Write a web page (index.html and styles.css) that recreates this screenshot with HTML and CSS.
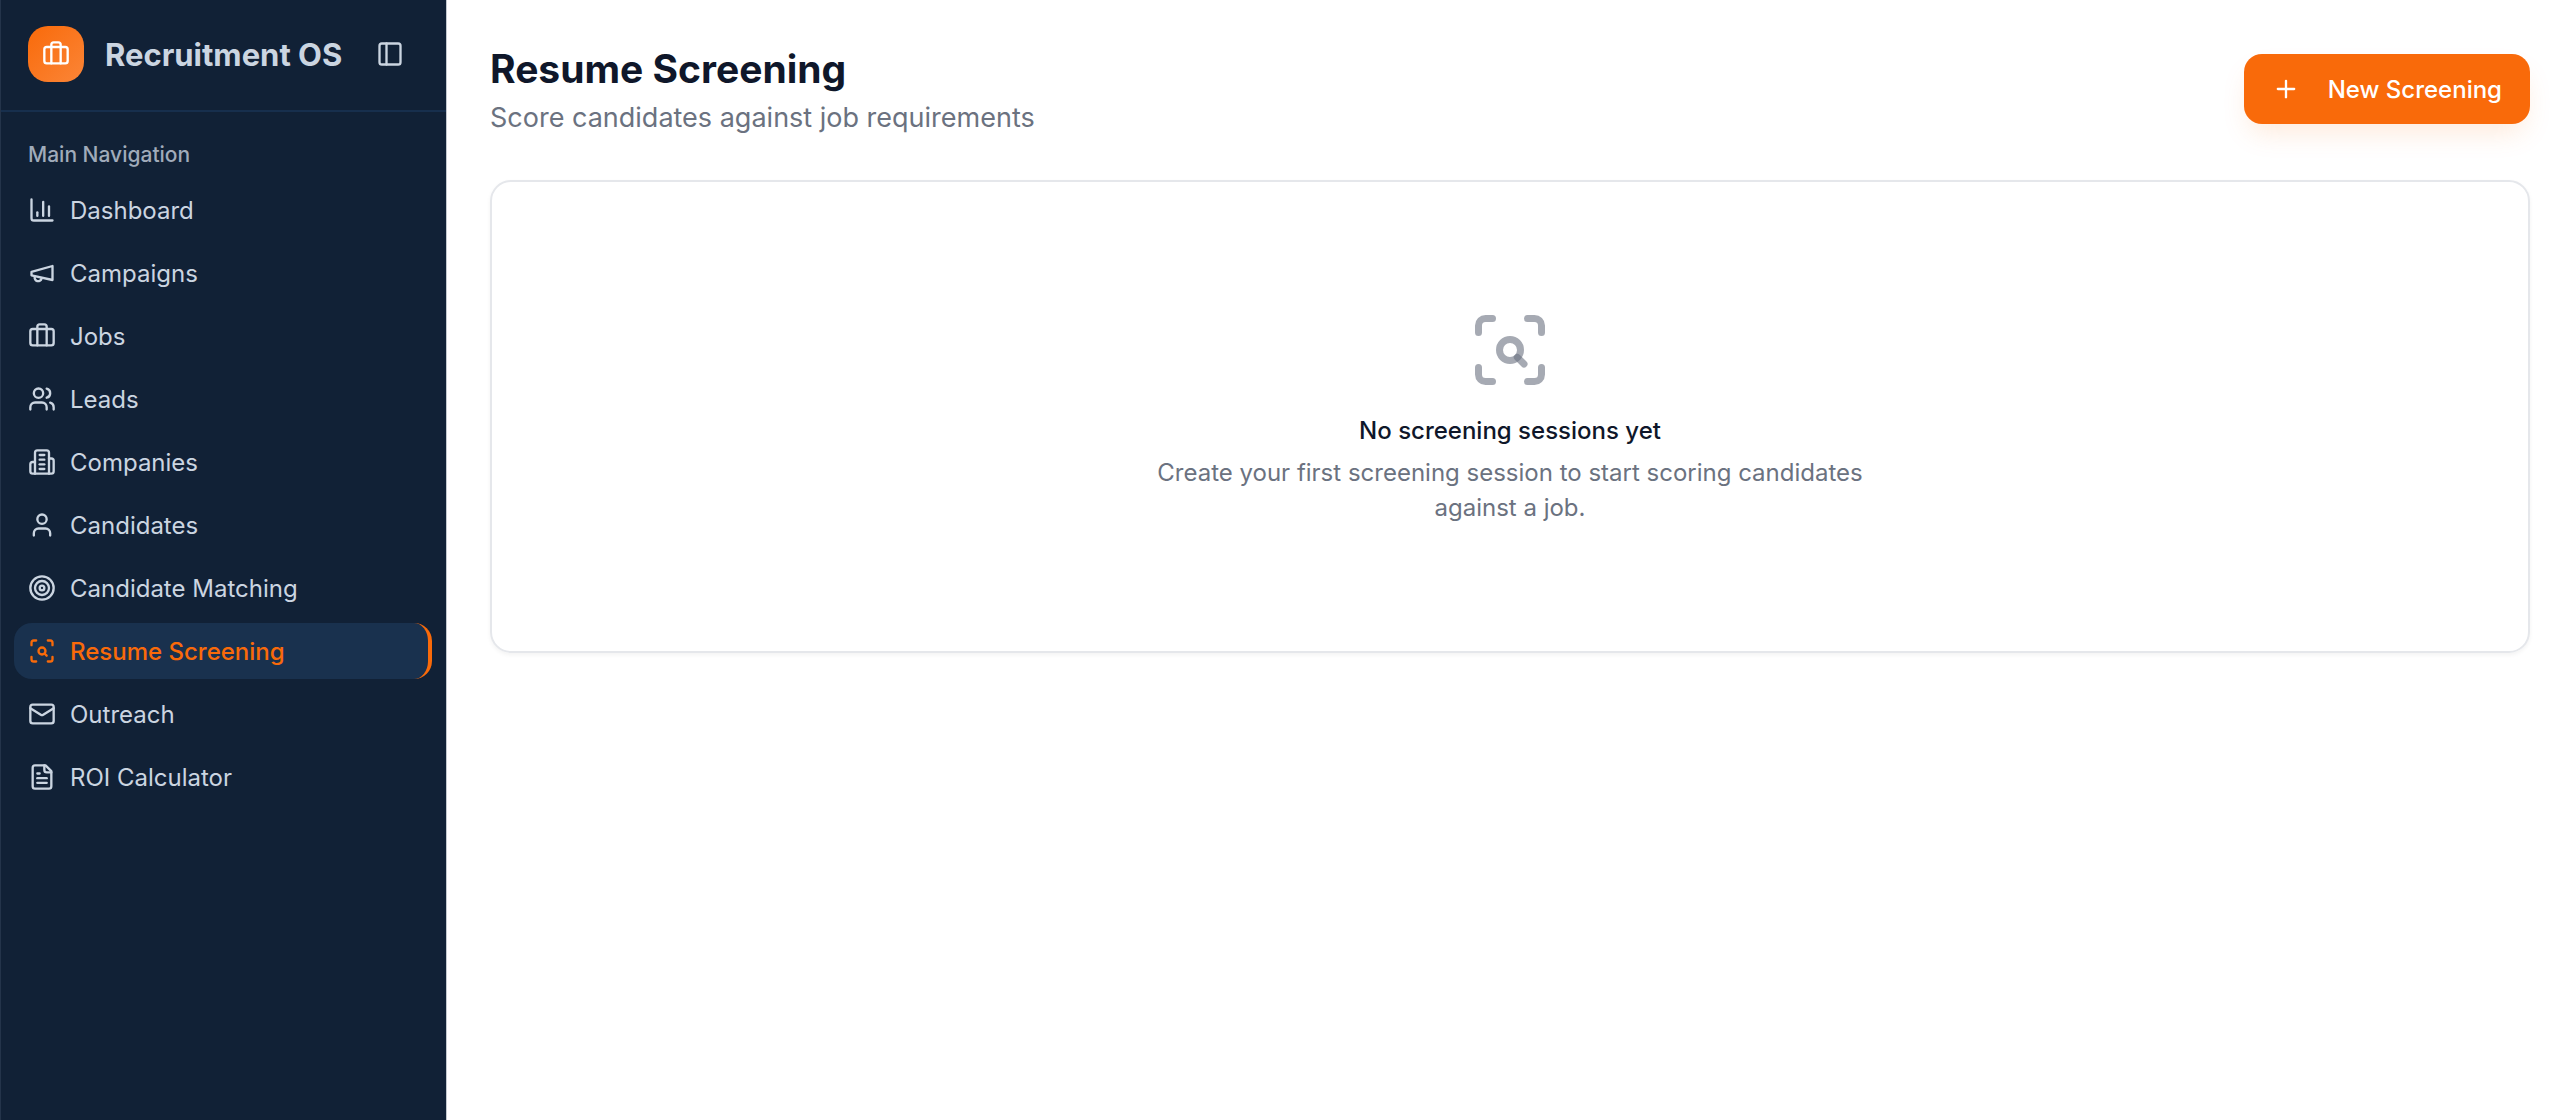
FILE: index.html
```html
<!DOCTYPE html>
<html lang="en">
<head>
<meta charset="utf-8">
<meta name="viewport" content="width=device-width, initial-scale=1">
<title>Resume Screening - Recruitment OS</title>
<link rel="stylesheet" href="styles.css">
</head>
<body>
<div class="app">
  <aside class="sidebar">
    <header class="sidebar-header">
      <span class="logo">
        <svg class="icon" viewBox="0 0 24 24" aria-hidden="true"><path d="M16 20V4a2 2 0 0 0-2-2h-4a2 2 0 0 0-2 2v16"/><rect x="2" y="6" width="20" height="14" rx="2"/></svg>
      </span>
      <span class="brand">Recruitment OS</span>
      <button class="toggle" type="button" aria-label="Toggle sidebar">
        <svg class="icon" viewBox="0 0 24 24" aria-hidden="true"><rect x="3" y="3" width="18" height="18" rx="2"/><path d="M9 3v18"/></svg>
      </button>
    </header>
    <nav class="nav" aria-labelledby="nav-label">
      <h2 class="nav-label" id="nav-label">Main Navigation</h2>
      <ul class="nav-list">
        <li><a class="nav-item" href="#dashboard"><svg class="icon" viewBox="0 0 24 24" aria-hidden="true"><path d="M3 3v16a2 2 0 0 0 2 2h16"/><path d="M18 17V9"/><path d="M13 17V5"/><path d="M8 17v-3"/></svg>Dashboard</a></li>
        <li><a class="nav-item" href="#campaigns"><svg class="icon" viewBox="0 0 24 24" aria-hidden="true"><path d="m3 11 18-5v12L3 14v-3z"/><path d="M11.6 16.8a3 3 0 1 1-5.8-1.6"/></svg>Campaigns</a></li>
        <li><a class="nav-item" href="#jobs"><svg class="icon" viewBox="0 0 24 24" aria-hidden="true"><path d="M16 20V4a2 2 0 0 0-2-2h-4a2 2 0 0 0-2 2v16"/><rect x="2" y="6" width="20" height="14" rx="2"/></svg>Jobs</a></li>
        <li><a class="nav-item" href="#leads"><svg class="icon" viewBox="0 0 24 24" aria-hidden="true"><path d="M16 21v-2a4 4 0 0 0-4-4H6a4 4 0 0 0-4 4v2"/><circle cx="9" cy="7" r="4"/><path d="M22 21v-2a4 4 0 0 0-3-3.87"/><path d="M16 3.13a4 4 0 0 1 0 7.75"/></svg>Leads</a></li>
        <li><a class="nav-item" href="#companies"><svg class="icon" viewBox="0 0 24 24" aria-hidden="true"><path d="M6 22V4a2 2 0 0 1 2-2h8a2 2 0 0 1 2 2v18Z"/><path d="M6 12H4a2 2 0 0 0-2 2v6a2 2 0 0 0 2 2h2"/><path d="M18 9h2a2 2 0 0 1 2 2v9a2 2 0 0 1-2 2h-2"/><path d="M10 6h4"/><path d="M10 10h4"/><path d="M10 14h4"/><path d="M10 18h4"/></svg>Companies</a></li>
        <li><a class="nav-item" href="#candidates"><svg class="icon" viewBox="0 0 24 24" aria-hidden="true"><path d="M19 21v-2a4 4 0 0 0-4-4H9a4 4 0 0 0-4 4v2"/><circle cx="12" cy="7" r="4"/></svg>Candidates</a></li>
        <li><a class="nav-item" href="#matching"><svg class="icon" viewBox="0 0 24 24" aria-hidden="true"><circle cx="12" cy="12" r="10"/><circle cx="12" cy="12" r="6"/><circle cx="12" cy="12" r="2"/></svg>Candidate Matching</a></li>
        <li><a class="nav-item active" href="#screening" aria-current="page"><svg class="icon" viewBox="0 0 24 24" aria-hidden="true"><path d="M3 7V5a2 2 0 0 1 2-2h2"/><path d="M17 3h2a2 2 0 0 1 2 2v2"/><path d="M21 17v2a2 2 0 0 1-2 2h-2"/><path d="M7 21H5a2 2 0 0 1-2-2v-2"/><circle cx="12" cy="12" r="3"/><path d="m16 16-1.9-1.9"/></svg>Resume Screening</a></li>
        <li><a class="nav-item" href="#outreach"><svg class="icon" viewBox="0 0 24 24" aria-hidden="true"><rect x="2" y="4" width="20" height="16" rx="2"/><path d="m22 7-8.97 5.7a1.94 1.94 0 0 1-2.06 0L2 7"/></svg>Outreach</a></li>
        <li><a class="nav-item" href="#roi"><svg class="icon" viewBox="0 0 24 24" aria-hidden="true"><path d="M15 2H6a2 2 0 0 0-2 2v16a2 2 0 0 0 2 2h12a2 2 0 0 0 2-2V7Z"/><path d="M14 2v4a2 2 0 0 0 2 2h4"/><path d="M10 9H8"/><path d="M16 13H8"/><path d="M16 17H8"/></svg>ROI Calculator</a></li>
      </ul>
    </nav>
  </aside>
  <main class="main">
    <header class="page-header">
      <div>
        <h1 class="title">Resume Screening</h1>
        <p class="subtitle">Score candidates against job requirements</p>
      </div>
      <button class="primary" type="button">
        <svg class="icon" viewBox="0 0 24 24" aria-hidden="true"><path d="M5 12h14"/><path d="M12 5v14"/></svg>
        New Screening
      </button>
    </header>
    <section class="card">
      <svg class="icon empty-icon" viewBox="0 0 24 24" aria-hidden="true"><path d="M3 7V5a2 2 0 0 1 2-2h2"/><path d="M17 3h2a2 2 0 0 1 2 2v2"/><path d="M21 17v2a2 2 0 0 1-2 2h-2"/><path d="M7 21H5a2 2 0 0 1-2-2v-2"/><circle cx="12" cy="12" r="3"/><path d="m16 16-1.9-1.9"/></svg>
      <h2 class="empty-title">No screening sessions yet</h2>
      <p class="empty-text">Create your first screening session to start scoring candidates against a job.</p>
    </section>
  </main>
</div>
</body>
</html>
```
FILE: styles.css
```css
* {
  box-sizing: border-box;
}

body {
  margin: 0;
  background: #fff;
  color: #0f172a;
  font: 400 24px/35px Inter, "Liberation Sans", sans-serif;
}

h1, h2, p, ul {
  margin: 0;
  padding: 0;
}

button {
  border: 0;
  font: inherit;
  cursor: pointer;
}

.icon {
  width: 28px;
  height: 28px;
  flex: none;
  fill: none;
  stroke: currentColor;
  stroke-width: 2;
  stroke-linecap: round;
  stroke-linejoin: round;
}

.app {
  display: flex;
  min-height: 100vh;
}

/* Sidebar */
.sidebar {
  flex: 0 0 447px;
  background: #112136;
  color: #cbd5e1;
  border-left: 1px solid #24344a;
  border-right: 1px solid #c3c8cf;
}

.sidebar-header {
  display: flex;
  align-items: center;
  height: 112px;
  padding: 0 42px 2px 27px;
  border-bottom: 2px solid #172f4d;
}

.logo {
  display: grid;
  place-items: center;
  width: 56px;
  height: 56px;
  border-radius: 20px;
  background: linear-gradient(135deg, #f96a0a, #fb8537);
  color: #fff;
}

.brand {
  margin-left: 21px;
  font-size: 31px;
  font-weight: 700;
}

.toggle {
  display: flex;
  margin-left: auto;
  padding: 0;
  background: none;
  color: inherit;
}

.nav {
  padding: 16px 14px 14px 13px;
}

.nav-label {
  padding: 0 14px;
  color: #a0abba;
  font-size: 21px;
  font-weight: 500;
  line-height: 54px;
}

.nav-list {
  display: grid;
  gap: 7px;
  list-style: none;
}

.nav-item {
  display: flex;
  align-items: center;
  gap: 14px;
  height: 56px;
  padding: 0 14px;
  border-radius: 18px;
  color: inherit;
  text-decoration: none;
}

.nav-item.active {
  border-right: 4px solid #f96a0a;
  background: #19314e;
  color: #f96a0a;
  font-weight: 500;
}

/* Main area */
.main {
  flex: 1;
  min-width: 0;
  padding: 40px 30px 42px 43px;
}

.page-header {
  display: flex;
  align-items: center;
  justify-content: space-between;
  margin-bottom: 42px;
}

.title {
  font-size: 39px;
  font-weight: 700;
  line-height: 58px;
}

.subtitle {
  color: #6b7280;
  font-size: 27px;
  line-height: 40px;
}

.primary {
  display: flex;
  align-items: center;
  gap: 28px;
  height: 70px;
  padding: 0 28px;
  border-radius: 18px;
  background: #f96a0a;
  box-shadow: 0 14px 28px -6px rgba(249, 106, 10, 0.15);
  color: #fff;
  font-weight: 500;
}

.card {
  display: flex;
  flex-direction: column;
  align-items: center;
  padding: 126px 42px;
  border: 2px solid #e5e7eb;
  border-radius: 21px;
  box-shadow: 0 2px 4px rgba(0, 0, 0, 0.05);
  text-align: center;
}

.empty-icon {
  width: 84px;
  height: 84px;
  color: rgba(107, 114, 128, 0.6);
}

.empty-title {
  margin: 21px 0 7px;
  font-size: 24px;
  font-weight: 500;
}

.empty-text {
  max-width: 784px;
  color: #6b7280;
}
```
